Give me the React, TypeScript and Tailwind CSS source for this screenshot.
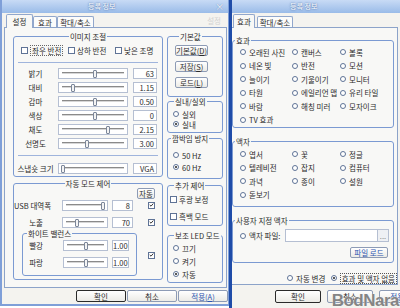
import React from "react";

const cx = (...c: (string | false | undefined)[]) => c.filter(Boolean).join(" ");

type Row = { label: string; value: string; pos: number };

const IMAGE_ROWS: Row[] = [
  { label: "밝기", value: "63", pos: 0.53 },
  { label: "대비", value: "1.15", pos: 0.18 },
  { label: "감마", value: "0.50", pos: 0.53 },
  { label: "색상", value: "0", pos: 0.53 },
  { label: "채도", value: "2.15", pos: 0.74 },
  { label: "선명도", value: "3.00", pos: 0.4 },
];

const EFFECTS = [
  "오래된 사진", "캔버스", "볼록",
  "네온 빛", "반전", "모션",
  "늘이기", "기울이기", "모니터",
  "타원", "에일리언 맵", "유리 타일",
  "바람", "해칭 미러", "모자이크",
  "TV 효과",
];

const FRAMES = [
  "엽서", "꽃", "정글",
  "텔레비전", "잡지", "컴퓨터",
  "과녁", "종이", "설원",
  "돋보기",
];

const Check = ({ checked = false, label, focus = false }: { checked?: boolean; label?: string; focus?: boolean }) => (
  <span className="flex items-center gap-[2px] whitespace-nowrap">
    <span className="flex h-[7px] w-[7px] shrink-0 items-center justify-center border border-[#5f7396] bg-white">
      {checked && (
        <svg viewBox="0 0 7 7" className="h-[6px] w-[6px]">
          <path d="M1 3.4L2.8 5.2L6 1.5" fill="none" stroke="#262626" strokeWidth="1.3" />
        </svg>
      )}
    </span>
    {label && <span className={cx(focus && "border border-dotted border-[#666] px-px")}>{label}</span>}
  </span>
);

const Radio = ({ checked = false, label, focus = false }: { checked?: boolean; label: string; focus?: boolean }) => (
  <span className="flex items-center gap-[3px] whitespace-nowrap">
    <span className="flex h-[6px] w-[6px] shrink-0 items-center justify-center rounded-full border border-[#5f7396] bg-white">
      {checked && <span className="h-[2px] w-[2px] rounded-full bg-[#222]" />}
    </span>
    <span className={cx(focus && "border border-dotted border-[#555] px-px")}>{label}</span>
  </span>
);

const Slider = ({ pos, className }: { pos: number; className: string }) => (
  <div className={cx("relative flex h-[11px] items-center border border-[#b5bfd2] bg-white px-[3px]", className)}>
    <div className="h-[3px] w-full border-y border-t-[#8a8a8a] border-b-white bg-[#d6d6d6]" />
    <span
      className="absolute top-px h-[8px] w-[4px] -translate-x-1/2 rounded-[1px] border border-[#7c879a] bg-[#f3f3f3]"
      style={{ left: `calc(3px + (100% - 6px) * ${pos})` }}
    />
  </div>
);

const Value = ({ v, className }: { v: string; className: string }) => (
  <div className={cx("h-[11px] border border-[#b5bfd2] bg-white pr-[2px] text-right leading-[9px]", className)}>{v}</div>
);

const Btn = ({
  children,
  className,
  strong = false,
  blue = false,
}: {
  children: React.ReactNode;
  className: string;
  strong?: boolean;
  blue?: boolean;
}) => (
  <div
    className={cx(
      "flex items-center justify-center whitespace-nowrap rounded-[2px] bg-linear-to-b from-white to-[#ecebe6]",
      strong ? "border-[1.5px] border-[#2a2a2a]" : "border border-[#8d9bb5]",
      blue && "text-[#2c55b0]",
      className
    )}
  >
    {children}
  </div>
);

const Group = ({
  title,
  legend = "mx-auto",
  className,
  children,
}: {
  title: string;
  legend?: string;
  className?: string;
  children?: React.ReactNode;
}) => (
  <fieldset className={cx("min-w-0 rounded-[3px] border border-[#7b9ad2]", className)}>
    <legend className={cx("whitespace-nowrap px-px leading-[9px]", legend)}>{title}</legend>
    {children}
  </fieldset>
);

const Tab = ({ active = false, className, children }: { active?: boolean; className: string; children: React.ReactNode }) => (
  <div
    className={cx(
      "flex items-center justify-center rounded-t-[2px] border border-b-0 border-[#91a7cc]",
      active ? "relative z-10 -mb-px h-[14px] bg-[#f8f8f6]" : "h-[11px] bg-[#fcfcfb]",
      className
    )}
  >
    {children}
  </div>
);

const TitleBar = ({ offset, close = false }: { offset: string; close?: boolean }) => (
  <div className="flex h-[13px] shrink-0 items-center bg-linear-to-b from-[#c8dbf5] to-[#9abbe8] text-white">
    <span className={cx("text-[7px] [text-shadow:0_0_2px_#234a8c]", offset)}>등록 정보</span>
    {close && <span className="ml-auto mr-[4px] text-[9px] leading-[9px] [text-shadow:0_0_1px_#3f649f]">×</span>}
  </div>
);

const ImageRow = ({ label, value, pos }: Row) => (
  <div className="flex h-[14px] items-center pl-[3px]">
    <span className="w-[37px] whitespace-nowrap text-center">{label}</span>
    <Slider pos={pos} className="ml-[4px] w-[70px]" />
    <Value v={value} className="ml-[5px] w-[24px]" />
  </div>
);

const AutoRow = ({ label, value, pos, className }: Row & { className?: string }) => (
  <div className={cx("flex h-[12px] items-center", className)}>
    <span className="w-[29px] whitespace-nowrap text-right">{label}</span>
    <Slider pos={pos} className="ml-[19px] w-[46px]" />
    <Value v={value} className="ml-[4px] w-[21px]" />
    <span className="ml-[15px]">
      <Check checked />
    </span>
  </div>
);

const WbRow = ({ label, pos, className }: { label: string; pos: number; className?: string }) => (
  <div className={cx("flex h-[12px] items-center", className)}>
    <span className="w-[20px] whitespace-nowrap text-right">{label}</span>
    <Slider pos={pos} className="ml-[20px] w-[45px]" />
    <Value v="1.00" className="ml-[4px] w-[17px]" />
  </div>
);

const LeftWindow = () => (
  <div className="flex h-[306px] w-[229px] shrink-0 flex-col border-b-2 border-l-2 border-r border-[#7f9fd8] bg-[#f4f3ef]">
    <TitleBar offset="ml-[86px]" close />
    <div className="flex h-[14px] items-end pl-[4px]">
      <Tab active className="w-[27px]">설정</Tab>
      <Tab className="w-[24px]">효과</Tab>
      <Tab className="w-[37px]">확대/축소</Tab>
      <span className="mb-[2px] ml-auto mr-[7px] text-[#d2d2d2]">설정</span>
    </div>
    <div className="ml-[2px] flex h-[261px] w-[223px] gap-[4px] border border-[#8ca3c9] bg-[#f8f8f6] pl-[8px] pt-[4px]">
      <div className="flex w-[150px] flex-col">
        <Group title="이미지 조절" className="h-[145px]">
          <div className="mt-[3px] flex h-[12px] items-center pl-[7px]">
            <div className="w-[47px]">
              <Check label="좌우 반전" focus />
            </div>
            <div className="w-[47px]">
              <Check label="상하 반전" />
            </div>
            <Check label="낮은 조명" />
          </div>
          <div className="mx-[4px] mt-[6px] h-px bg-[#9fb4dc]" />
          <div className="mt-[3px] flex flex-col">
            {IMAGE_ROWS.map((r) => (
              <ImageRow key={r.label} {...r} />
            ))}
          </div>
          <div className="mx-[4px] mt-[5px] h-px bg-[#9fb4dc]" />
          <div className="mt-[5px]">
            <ImageRow label="스냅숏 크기" value="VGA" pos={0.02} />
          </div>
        </Group>
        <Group title="자동 모드 제어" className="mt-[1.5px] h-[101.5px]">
          <div className="mt-[0.5px] flex justify-end pr-[7px]">
            <Btn className="h-[11px] w-[18px]">자동</Btn>
          </div>
          <AutoRow label="USB 대역폭" value="8" pos={0.97} />
          <AutoRow label="노출" value="70" pos={0.29} className="mt-[5px]" />
          <div className="flex items-center">
            <Group title="화이트 밸런스" legend="ml-[4px]" className="ml-[8px] mt-[0.5px] h-[47.5px] w-[115px]">
              <WbRow label="빨강" pos={0.52} className="mt-[1.5px]" />
              <WbRow label="파랑" pos={0.52} className="mt-[5px]" />
            </Group>
            <span className="ml-[11px] mt-[6px]">
              <Check checked />
            </span>
          </div>
        </Group>
      </div>

      <div className="flex w-[56px] flex-col">
        <Group title="기본값" legend="ml-[11px]" className="h-[65px]">
          <div className="mt-[4px] flex flex-col gap-[5px] pl-[7px]">
            <Btn className="h-[11px] w-[33px]">
              기본값(<u>D</u>)
            </Btn>
            <Btn className="h-[11px] w-[33px]">
              저장(<u>S</u>)
            </Btn>
            <Btn className="h-[11px] w-[33px]">
              로드(<u>L</u>)
            </Btn>
          </div>
        </Group>
        <Group title="실내/실외" legend="ml-[6px]" className="h-[36px]">
          <div className="mt-[3px] pl-[5px]">
            <div className="flex h-[10px] items-center">
              <Radio label="실외" />
            </div>
            <div className="flex h-[10px] items-center">
              <Radio checked label="실내" />
            </div>
          </div>
        </Group>
        <Group title="깜박임 방지" legend="ml-[3px]" className="mt-px h-[45px]">
          <div className="mt-[6px] pl-[5px]">
            <div className="flex h-[12px] items-center">
              <Radio label="50 Hz" />
            </div>
            <div className="flex h-[12px] items-center">
              <Radio checked label="60 Hz" />
            </div>
          </div>
        </Group>
        <Group title="추가 제어" legend="ml-[6px]" className="mt-[1.5px] h-[45px]">
          <div className="mt-[3.5px] flex flex-col gap-[5px] pl-[2px]">
            <div className="flex h-[12px] items-center">
              <Check label="후광 보정" />
            </div>
            <div className="flex h-[12px] items-center">
              <Check label="흑백 모드" />
            </div>
          </div>
        </Group>
        <Group title="보조 LED 모드" legend="ml-[6px]" className="mt-[5px] h-[52.5px]">
          <div className="mt-[2px] pl-[5px]">
            <div className="flex h-[13px] items-center">
              <Radio label="끄기" />
            </div>
            <div className="flex h-[13px] items-center">
              <Radio label="켜기" />
            </div>
            <div className="flex h-[13px] items-center">
              <Radio checked label="자동" />
            </div>
          </div>
        </Group>
      </div>
    </div>
    <div className="flex flex-1 items-center justify-end gap-px">
      <Btn strong className="h-[12px] w-[50px]">확인</Btn>
      <Btn className="h-[12px] w-[50px]">취소</Btn>
      <Btn blue className="h-[12px] w-[50px]">
        적용(<u>A</u>)
      </Btn>
    </div>
  </div>
);

const RightWindow = () => (
  <div className="relative flex h-[308px] flex-1 flex-col overflow-hidden border-l-[3px] border-[#1f4ca8] bg-[#f4f3ef]">
    <TitleBar offset="ml-[58px]" />
    <div className="flex h-[14px] items-end gap-[2px] pl-px">
      <Tab active className="w-[22px]">효과</Tab>
      <Tab className="w-[36px]">확대/축소</Tab>
    </div>
    <div className="flex h-[258px] w-[166px] flex-col border-y border-r border-[#8ca3c9] bg-[#f8f8f6]">
      <Group title="효과" legend="ml-[2px]" className="mt-[7.5px] h-[92px] w-[162px]">
        <div className="mt-[0.75px] grid auto-rows-[13.5px] grid-cols-[52px_48px_1fr] pl-[7px]">
          {EFFECTS.map((e) => (
            <div key={e} className="flex items-center">
              <Radio label={e} />
            </div>
          ))}
        </div>
      </Group>
      <Group title="액자" legend="ml-[2px]" className="mt-[9px] h-[70.5px] w-[162px]">
        <div className="mt-[1.75px] grid auto-rows-[13.5px] grid-cols-[52px_48px_1fr] pl-[7px]">
          {FRAMES.map((f) => (
            <div key={f} className="flex items-center">
              <Radio label={f} />
            </div>
          ))}
        </div>
      </Group>
      <Group title="사용자 지정 액자" legend="ml-[2px]" className="mt-[8.5px] h-[47px] w-[162px]">
        <div className="mt-[4.5px] flex h-[13px] items-center pl-[7px]">
          <div className="w-[45px]">
            <Radio label="액자 파일:" />
          </div>
          <div className="flex h-[13px] w-[104px] border border-[#b5bfd2] bg-white">
            <span className="ml-auto flex w-[11px] items-center justify-center border-l border-[#b5bfd2] bg-[#eef0f4] text-[#8a8a8a]">
              ...
            </span>
          </div>
        </div>
        <div className="mt-[5px] flex justify-end pr-[5px]">
          <Btn blue className="h-[11px] w-[38px]">파일 로드</Btn>
        </div>
      </Group>
      <div className="mt-[9.5px] flex h-[12px] items-center pl-[55px]">
        <div className="w-[45px]">
          <Radio label="자동 변경" />
        </div>
        <Radio checked focus label="효과 및 액자 없음" />
      </div>
    </div>
    <div className="mt-[5px] flex h-[13px] gap-[6px] pl-[43px]">
      <Btn strong className="h-[13px] w-[46px] shrink-0">확인</Btn>
      <Btn className="h-[13px] w-[46px] shrink-0">취소</Btn>
      <Btn blue className="h-[13px] w-[46px] shrink-0">
        적용(<u>A</u>)
      </Btn>
    </div>
    <span className="absolute bottom-[-3px] right-[1px] font-['Liberation_Sans',sans-serif] text-[17px] font-bold leading-[20px] tracking-[-0.5px] text-[#858585] [text-shadow:0_0_1px_#fff]">
      BodNara
    </span>
  </div>
);

export default function App() {
  return (
    <div className="flex h-[308px] w-[400px] overflow-hidden bg-white font-['Noto_Sans_CJK_KR','Noto_Sans',sans-serif] text-[7.5px] leading-[9px] text-[#2b2b2b]">
      <LeftWindow />
      <RightWindow />
    </div>
  );
}
